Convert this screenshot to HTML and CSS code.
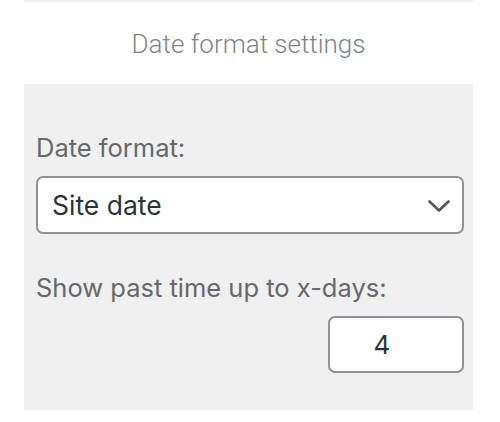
FILE: index.html
```html
<!DOCTYPE html>
<html lang="en">
<head>
<meta charset="utf-8">
<title>Date format settings</title>
<link rel="stylesheet" href="styles.css">
</head>
<body>
<div class="widget">
  <div class="top-strip"></div>
  <h2 class="title">Date format settings</h2>
  <div class="panel">
    <label class="label label-first" for="fmt">Date format:</label>
    <div class="select-wrap">
      <select id="fmt" class="select">
        <option>Site date</option>
      </select>
      <svg class="chevron" width="22" height="12" viewBox="0 0 22 12" aria-hidden="true">
        <path d="M1.5 1.5 L11 10.5 L20.5 1.5" fill="none" stroke="#50575e" stroke-width="2.6" stroke-linecap="round" stroke-linejoin="round"/>
      </svg>
    </div>
    <label class="label label-second" for="days">Show past time up to x-days:</label>
    <div class="number-row">
      <input id="days" class="number" type="text" value="4">
    </div>
  </div>
</div>
</body>
</html>
```

FILE: styles.css
```css
html, body {
  margin: 0;
  padding: 0;
  background: #ffffff;
}

.widget {
  margin: 0 27px 0 24px;
  font-family: Inter, "Noto Sans", sans-serif;
}

.top-strip {
  height: 2px;
  background: #f0f0f0;
}

.title {
  margin: 0;
  height: 82px;
  display: flex;
  align-items: center;
  justify-content: center;
  font-family: Roboto, sans-serif;
  font-weight: 300;
  font-size: 26px;
  color: #7f8388;
  padding-top: 1px;
  box-sizing: border-box;
}

.panel {
  background: #f0f0f0;
  padding: 48px 9px 37px 12px;
  display: flex;
  flex-direction: column;
}

.label {
  display: block;
  font-size: 25.5px;
  line-height: 32px;
  color: #65686c;
}

.label-second {
  margin-top: 38px;
}

.select-wrap {
  position: relative;
  margin-top: 12px;
}

.select {
  appearance: none;
  -webkit-appearance: none;
  display: block;
  width: 100%;
  height: 58px;
  box-sizing: border-box;
  border: 2px solid #8f9399;
  border-radius: 7px;
  background: #ffffff;
  padding: 0 50px 0 14px;
  font-family: Inter, "Noto Sans", sans-serif;
  font-size: 26.5px;
  color: #2c3338;
  margin: 0;
}

.chevron {
  position: absolute;
  right: 14px;
  top: 24px;
}

.number-row {
  display: flex;
  justify-content: flex-end;
  margin-top: 12px;
}

.number {
  width: 136px;
  height: 57px;
  box-sizing: border-box;
  border: 2px solid #8f9399;
  border-radius: 7px;
  background: #ffffff;
  padding: 0 28px 0 0;
  text-align: center;
  font-family: Inter, "Noto Sans", sans-serif;
  font-size: 26px;
  color: #2c3338;
  margin: 0;
}
```
